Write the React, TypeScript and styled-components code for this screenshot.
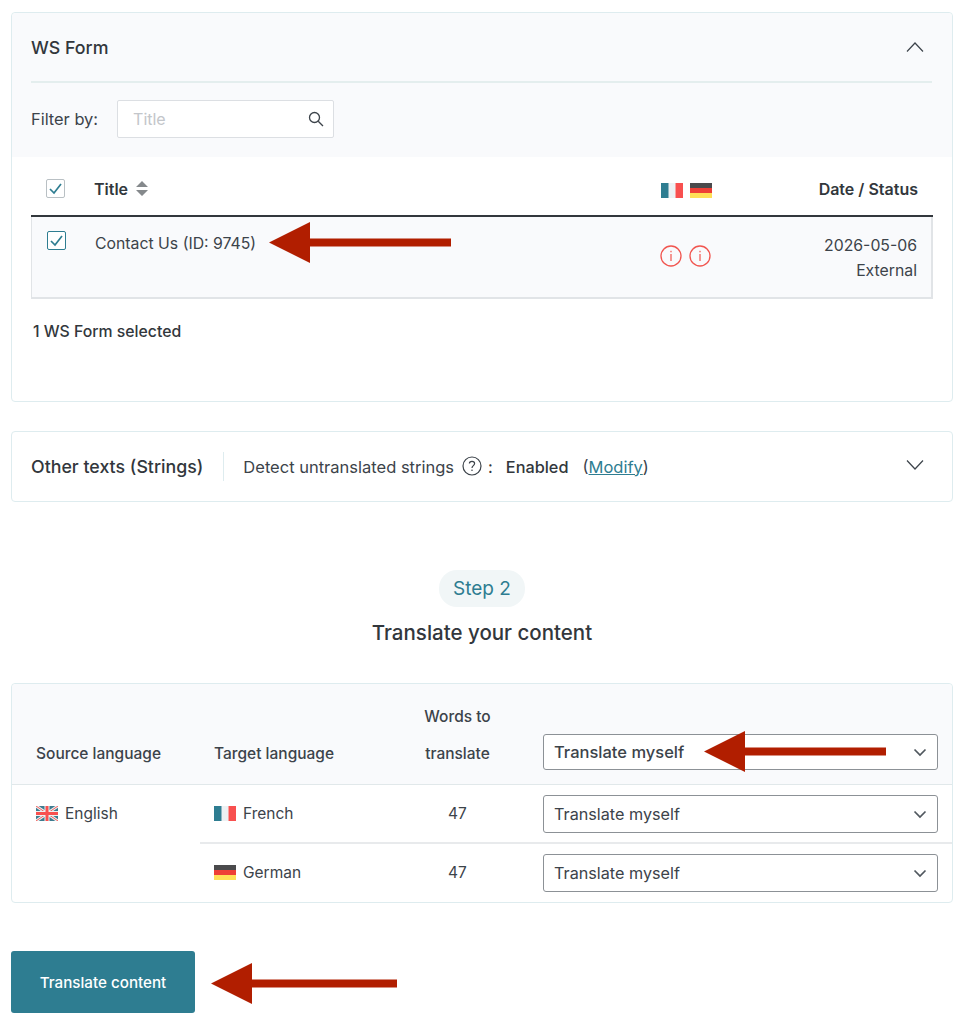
import React, { FC } from 'react'
import styled, { createGlobalStyle } from 'styled-components'

const GlobalStyle = createGlobalStyle`
  html, body {
    margin: 0;
    background: #fff;
  }
  body {
    font-family: Inter, "Noto Sans", "Liberation Sans", sans-serif;
    color: #32373c;
    -webkit-font-smoothing: antialiased;
  }
  * { box-sizing: border-box; }
`

const Page = styled.div`
  position: relative;
  width: 963px;
  height: 1024px;
  padding: 12px 10px 0 11px;
  overflow: hidden;
`

const Card = styled.section`
  border: 1px solid #deecef;
  border-radius: 4px;
  background: #fff;
`

const FormCard = styled(Card)`
  height: 390px;
`

const CardHead = styled.div`
  height: 144px;
  padding: 0 20px 0 19px;
  background: #f9fafc;
  border-radius: 4px 4px 0 0;
`

const TitleRow = styled.div`
  height: 70px;
  display: flex;
  align-items: center;
  justify-content: space-between;
  border-bottom: 2px solid #e4eeee;
  padding-right: 8px;
`

const CardTitle = styled.h2`
  margin: 0;
  font-size: 17.8px;
  font-weight: 500;
  color: #32373c;
  white-space: nowrap;
`

const FilterRow = styled.div`
  display: flex;
  align-items: center;
  gap: 19px;
  margin-top: 17px;
  font-size: 16.4px;
  color: #3c434a;
`

const SearchBox = styled.div`
  width: 217px;
  height: 38px;
  display: flex;
  align-items: center;
  justify-content: space-between;
  padding: 0 9px 0 15px;
  background: #fff;
  border: 1px solid #dcdfe3;
  border-radius: 2px;
  color: #c3c6ca;
  font-size: 16px;
`

const FormTable = styled.div`
  margin: 0 19px;
`

const HeadRow = styled.div`
  height: 60px;
  display: grid;
  grid-template-columns: 48px 1fr 51px 206px;
  align-items: center;
  padding: 5px 15px 0;
  border-bottom: 2px solid #32373c;
  font-size: 16px;
  font-weight: 600;
  color: #32373c;
`

const TitleHead = styled.div`
  display: flex;
  align-items: center;
  gap: 8px;
`

const FlagPair = styled.div`
  display: flex;
  gap: 7px;
  padding-top: 3px;
`

const RightCell = styled.div`
  text-align: right;
`

const FormRow = styled.div`
  height: 82px;
  display: grid;
  grid-template-columns: 48px 1fr 51px 206px;
  padding: 0 14px 0 15px;
  background: #f9fafc;
  border: 1px solid #e1e4e7;
  border-width: 0 2px 2px 1px;
  font-size: 15.8px;
  color: #3c434a;
`

const RowCheckCell = styled.div`
  padding-top: 14px;
`

const RowTitle = styled.div`
  padding-top: 18px;
  line-height: 17px;
`

const StatusIcons = styled.div`
  display: flex;
  gap: 7px;
  padding-top: 28px;
`

const DateCell = styled.div`
  padding-top: 16px;
  text-align: right;
  line-height: 25px;
`

const SelectedNote = styled.p`
  margin: 23px 0 0 21px;
  font-size: 15.8px;
  font-weight: 500;
  color: #32373c;
`

const CheckBox = styled.span<{ $active?: boolean }>`
  display: flex;
  align-items: center;
  justify-content: center;
  width: 19px;
  height: 19px;
  background: #fff;
  border: 1px solid ${(p) => (p.$active ? '#2e7d91' : '#b9c0c4')};
  border-radius: 2px;
`

const StringsCard = styled(Card)`
  height: 71px;
  margin-top: 29px;
  display: flex;
  align-items: center;
  padding: 0 28px 0 19px;
`

const VRule = styled.span`
  width: 1px;
  height: 29px;
  margin: 0 19px 0 20px;
  background: #deecef;
`

const DetectText = styled.span`
  font-size: 16.5px;
  color: #3c434a;
  white-space: nowrap;
`

const HelpIcon = styled.span`
  display: flex;
  margin: 0 6px 2px 8px;
`

const Colon = styled.span`
  font-size: 16.5px;
  margin-right: 13px;
`

const EnabledText = styled.span`
  font-size: 16.3px;
  font-weight: 500;
  color: #32373c;
`

const ModifyWrap = styled.span`
  margin-left: 14px;
  font-size: 16.5px;
  color: #3c434a;
`

const ModifyLink = styled.a`
  color: #2e7d91;
  text-decoration: underline;
`

const PushRight = styled.span`
  display: flex;
  margin: 0 0 4px auto;
`

const StepBlock = styled.div`
  display: flex;
  flex-direction: column;
  align-items: center;
  margin-top: 68px;
`

const StepPill = styled.div`
  width: 86px;
  height: 37px;
  display: flex;
  align-items: center;
  justify-content: center;
  background: #f1f6f7;
  border-radius: 18px;
  color: #2e7d91;
  font-size: 19px;
`

const StepTitle = styled.h3`
  margin: 13px 0 0;
  font-size: 20.5px;
  line-height: 26px;
  font-weight: 500;
  color: #32373c;
`

const LangCard = styled(Card)`
  height: 220px;
  margin-top: 37px;
  display: grid;
  grid-template-columns: 188px 1fr;
  grid-template-rows: 101px 1fr;
  font-size: 15.5px;
  color: #3c434a;
`

const LangHead = styled.div`
  grid-column: 1 / 3;
  display: grid;
  grid-template-columns: 188px 180px 163px 1fr;
  align-items: end;
  padding-bottom: 14px;
  background: #f9fafc;
  border-bottom: 1px solid #e1e8ea;
  border-radius: 4px 4px 0 0;
  font-weight: 500;
`

const HeadLabel = styled.div`
  padding-left: 24px;
  padding-bottom: 7px;
  &:nth-child(2) { padding-left: 14px; }
`

const WordsHead = styled.div`
  text-align: center;
  line-height: 37px;
  padding-right: 8px;
  margin-bottom: -2px;
`

const SourceCell = styled.div`
  padding: 20px 0 0 24px;
`

const LangName = styled.div`
  display: flex;
  align-items: center;
  gap: 7px;
  line-height: 17px;
`

const TargetRows = styled.div`
  display: grid;
  grid-template-rows: 59px 1fr;
`

const TargetRow = styled.div`
  display: grid;
  grid-template-columns: 180px 163px 1fr;
  &:first-child { border-bottom: 2px solid #e8eaec; }
`

const TargetName = styled.div`
  padding: 20px 0 0 14px;
`

const WordCount = styled.div`
  padding-top: 20px;
  padding-right: 8px;
  line-height: 17px;
  text-align: center;
`

const SelectBox = styled.div<{ $strong?: boolean }>`
  width: 395px;
  height: ${(p) => (p.$strong ? 36 : 38)}px;
  margin-top: ${(p) => (p.$strong ? 0 : 10)}px;
  display: flex;
  align-items: center;
  justify-content: space-between;
  padding: 0 10px 0 10px;
  background: #fff;
  border: 1px solid #8c9196;
  border-radius: 3px;
  font-size: ${(p) => (p.$strong ? 16.5 : 16.2)}px;
  font-weight: ${(p) => (p.$strong ? 500 : 400)};
  color: #3c434a;
`

const PrimaryButton = styled.button`
  display: block;
  width: 184px;
  height: 62px;
  margin-top: 48px;
  background: #2e7d91;
  border: 0;
  border-radius: 3px;
  color: #fff;
  font-family: inherit;
  font-size: 15.2px;
  font-weight: 500;
`

// red annotation arrows sit over the screenshot content
const ArrowMark = styled.svg<{ $x: number; $y: number }>`
  position: absolute;
  left: ${(p) => p.$x}px;
  top: ${(p) => p.$y}px;
`

const Arrow: FC<{ x: number; y: number; length: number }> = ({ x, y, length }) => (
  <ArrowMark $x={x} $y={y} width={length} height={41} viewBox={`0 0 ${length} 41`}>
    <path d={`M0 20.5 L41 0 V16.5 H${length} V24.5 H41 V41 Z`} fill="#b11e00" />
  </ArrowMark>
)

const FlagFr: FC = () => (
  <svg width="22" height="15" viewBox="0 0 22 15">
    <rect width="8" height="15" fill="#2e7d91" />
    <rect x="7.5" width="7" height="15" fill="#edf1f3" />
    <rect x="14.5" width="7.5" height="15" fill="#f8504f" />
  </svg>
)

const FlagDe: FC = () => (
  <svg width="22" height="15" viewBox="0 0 22 15">
    <rect width="22" height="5" fill="#4a4a4c" />
    <rect y="5" width="22" height="5" fill="#ee3f36" />
    <rect y="10" width="22" height="5" fill="#ffdf57" />
  </svg>
)

const FlagUk: FC = () => (
  <svg width="22" height="15" viewBox="0 0 22 15">
    <rect width="22" height="15" fill="#3e7c90" />
    <path d="M0 0L22 15M22 0L0 15" stroke="#eef1f2" strokeWidth="3" />
    <path d="M0 0L22 15M22 0L0 15" stroke="#f25f5c" strokeWidth="1" />
    <path d="M11 0V15M0 7.5H22" stroke="#eef1f2" strokeWidth="5" />
    <path d="M11 0V15M0 7.5H22" stroke="#f8504f" strokeWidth="3" />
  </svg>
)

const InfoIcon: FC = () => (
  <svg width="22" height="22" viewBox="0 0 22 22" fill="none">
    <circle cx="11" cy="11" r="10" stroke="#f1554f" strokeWidth="1.3" />
    <rect x="10.4" y="5.8" width="1.2" height="1.5" fill="#f1554f" />
    <rect x="10.4" y="9" width="1.2" height="7" fill="#f1554f" />
  </svg>
)

const Tick: FC = () => (
  <svg width="15" height="13" viewBox="0 0 15 13" fill="none">
    <path d="M2 7L6 11L13 2" stroke="#2e7d91" strokeWidth="1.7" />
  </svg>
)

const SearchIcon: FC = () => (
  <svg width="16" height="16" viewBox="0 0 16 16" fill="none">
    <circle cx="6.5" cy="6.5" r="5" stroke="#3c434a" strokeWidth="1.3" />
    <path d="M10.2 10.2L15 15" stroke="#3c434a" strokeWidth="1.3" />
  </svg>
)

const SortIcon: FC = () => (
  <svg width="12" height="15" viewBox="0 0 12 15">
    <path d="M6 0L12 6H0Z M0 9H12L6 15Z" fill="#85898c" />
  </svg>
)

const BigChevron: FC<{ up?: boolean }> = ({ up }) => (
  <svg width="18" height="10" viewBox="0 0 18 10" fill="none">
    <path d={up ? 'M1 9.5L9 1L17 9.5' : 'M1 .5L9 9L17 .5'} stroke="#3c434a" strokeWidth="1.2" />
  </svg>
)

const SmallChevron: FC = () => (
  <svg width="14" height="9" viewBox="0 0 14 9" fill="none">
    <path d="M1.5 1.5L7 7L12.5 1.5" stroke="#50575e" strokeWidth="1.7" />
  </svg>
)

const QuestionIcon: FC = () => (
  <svg width="20" height="20" viewBox="0 0 20 20" fill="none">
    <circle cx="10" cy="10" r="9" stroke="#3c434a" strokeWidth="1.2" />
    <path d="M7.4 7.6C7.4 4.6 12.6 4.6 12.6 7.6C12.6 9.7 10 9.6 10 12" stroke="#3c434a" strokeWidth="1.2" />
    <rect x="9.4" y="13.6" width="1.2" height="1.4" fill="#3c434a" />
  </svg>
)

const targets = [
  { name: 'French', flag: <FlagFr /> },
  { name: 'German', flag: <FlagDe /> },
]

export default function App() {
  return (
    <Page>
      <GlobalStyle />
      <FormCard>
        <CardHead>
          <TitleRow>
            <CardTitle>WS Form</CardTitle>
            <BigChevron up />
          </TitleRow>
          <FilterRow>
            <span>Filter by:</span>
            <SearchBox>
              <span>Title</span>
              <SearchIcon />
            </SearchBox>
          </FilterRow>
        </CardHead>
        <FormTable>
          <HeadRow>
            <CheckBox>
              <Tick />
            </CheckBox>
            <TitleHead>
              Title <SortIcon />
            </TitleHead>
            <FlagPair>
              <FlagFr />
              <FlagDe />
            </FlagPair>
            <RightCell>Date / Status</RightCell>
          </HeadRow>
          <FormRow>
            <RowCheckCell>
              <CheckBox $active>
                <Tick />
              </CheckBox>
            </RowCheckCell>
            <RowTitle>Contact Us (ID: 9745)</RowTitle>
            <StatusIcons>
              <InfoIcon />
              <InfoIcon />
            </StatusIcons>
            <DateCell>
              2026-05-06
              <br />
              External
            </DateCell>
          </FormRow>
        </FormTable>
        <SelectedNote>1 WS Form selected</SelectedNote>
      </FormCard>

      <StringsCard>
        <CardTitle>Other texts (Strings)</CardTitle>
        <VRule />
        <DetectText>Detect untranslated strings</DetectText>
        <HelpIcon>
          <QuestionIcon />
        </HelpIcon>
        <Colon>:</Colon>
        <EnabledText>Enabled</EnabledText>
        <ModifyWrap>
          (<ModifyLink href="#">Modify</ModifyLink>)
        </ModifyWrap>
        <PushRight>
          <BigChevron />
        </PushRight>
      </StringsCard>

      <StepBlock>
        <StepPill>Step 2</StepPill>
        <StepTitle>Translate your content</StepTitle>
      </StepBlock>

      <LangCard>
        <LangHead>
          <HeadLabel>Source language</HeadLabel>
          <HeadLabel>Target language</HeadLabel>
          <WordsHead>
            Words to
            <br />
            translate
          </WordsHead>
          <SelectBox $strong>
            Translate myself
            <SmallChevron />
          </SelectBox>
        </LangHead>
        <SourceCell>
          <LangName>
            <FlagUk />
            English
          </LangName>
        </SourceCell>
        <TargetRows>
          {targets.map((t) => (
            <TargetRow key={t.name}>
              <TargetName>
                <LangName>
                  {t.flag}
                  {t.name}
                </LangName>
              </TargetName>
              <WordCount>47</WordCount>
              <div>
                <SelectBox>
                  Translate myself
                  <SmallChevron />
                </SelectBox>
              </div>
            </TargetRow>
          ))}
        </TargetRows>
      </LangCard>

      <PrimaryButton>Translate content</PrimaryButton>

      <Arrow x={269} y={222} length={182} />
      <Arrow x={704} y={731} length={182} />
      <Arrow x={211} y={963} length={186} />
    </Page>
  )
}
